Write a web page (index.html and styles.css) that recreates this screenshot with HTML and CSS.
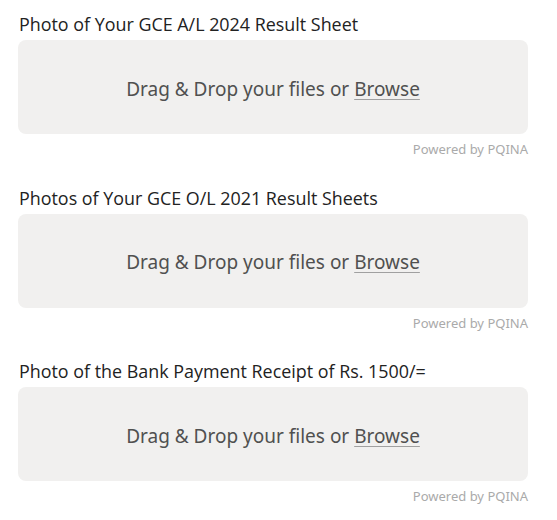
FILE: index.html
```html
<!DOCTYPE html>
<html>
<head>
<meta charset="utf-8">
<link rel="stylesheet" href="styles.css">
</head>
<body>
<div class="form">
  <div class="field">
    <label class="field-label">Photo of Your GCE A/L 2024 Result Sheet</label>
    <div class="drop">
      <span class="drop-label">Drag &amp; Drop your files or <span class="browse">Browse</span></span>
    </div>
    <div class="credits">Powered by PQINA</div>
  </div>
  <div class="field">
    <label class="field-label">Photos of Your GCE O/L 2021 Result Sheets</label>
    <div class="drop">
      <span class="drop-label">Drag &amp; Drop your files or <span class="browse">Browse</span></span>
    </div>
    <div class="credits">Powered by PQINA</div>
  </div>
  <div class="field">
    <label class="field-label">Photo of the Bank Payment Receipt of Rs. 1500/=</label>
    <div class="drop">
      <span class="drop-label">Drag &amp; Drop your files or <span class="browse">Browse</span></span>
    </div>
    <div class="credits">Powered by PQINA</div>
  </div>
</div>
</body>
</html>
```
FILE: styles.css
```css
html, body {
  margin: 0;
  padding: 0;
  background: #ffffff;
}
.form {
  width: 510px;
  margin-left: 18px;
  padding-top: 12px;
  display: flex;
  flex-direction: column;
  gap: 28.5px;
}
.field {
  display: flex;
  flex-direction: column;
}
.field-label {
  font-family: "Open Sans", "Lato", sans-serif;
  font-size: 17.9px;
  line-height: 24px;
  color: #222222;
  padding-left: 1px;
  margin-bottom: 4px;
}
.drop {
  height: 94px;
  background: #f1f0ef;
  border-radius: 8px;
  display: flex;
  align-items: center;
  justify-content: center;
}
.drop-label {
  font-family: "Noto Sans", "Open Sans", sans-serif;
  font-size: 19px;
  color: #505050;
  padding-top: 3px;
}
.browse {
  text-decoration: underline;
  text-decoration-color: #a0a0a0;
  text-underline-offset: 3px;
}
.credits {
  font-family: "Noto Sans", "Open Sans", sans-serif;
  font-size: 13px;
  line-height: 16px;
  color: #aaaaaa;
  text-align: right;
  margin-top: 7px;
}
```
